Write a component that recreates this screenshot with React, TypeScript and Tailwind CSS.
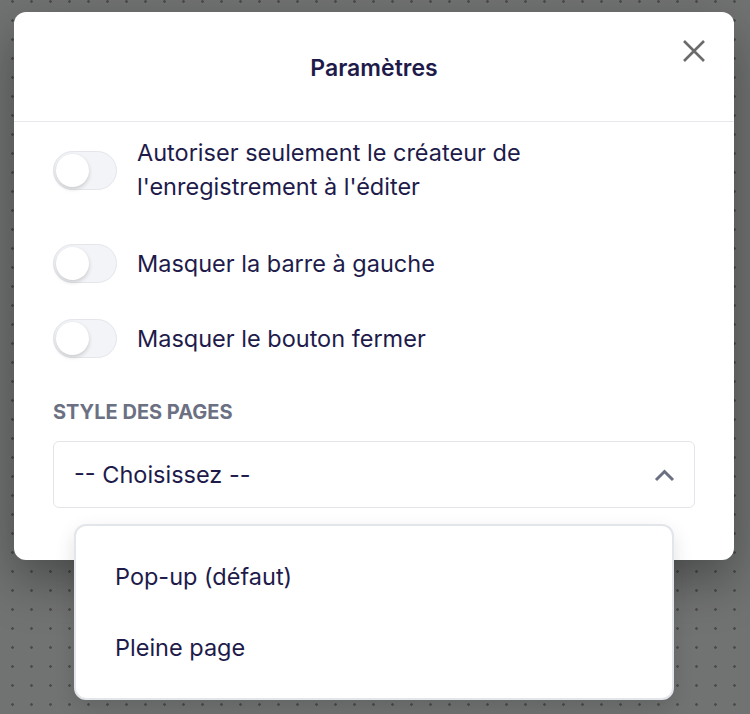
import { useState } from "react";

const font = { fontFamily: "Inter, 'Noto Sans', sans-serif" };

function Toggle() {
  return (
    <div className="relative h-[39px] w-16 shrink-0 rounded-full border border-[#e4e6eb] bg-[#f3f4f7]">
      <div className="absolute left-[2px] top-[2px] h-[33px] w-[33px] rounded-full bg-white shadow-[0_2px_4px_rgba(0,0,0,0.18)]" />
    </div>
  );
}

function ToggleRow({ label }: { label: string }) {
  return (
    <div className="flex items-center gap-5">
      <Toggle />
      <span className="text-[23.5px] leading-[34px] text-[#1e1b4b]">{label}</span>
    </div>
  );
}

export default function App() {
  const [open] = useState(true);

  return (
    <div
      style={font}
      className="relative h-[714px] w-[750px] overflow-hidden bg-[#717272] bg-[radial-gradient(circle,#4b4b4b_1px,transparent_1.6px)] bg-[length:19px_19px] bg-[position:3px_-8px]"
    >
      <div className="relative ml-[14px] mt-[12px] w-[720px] rounded-xl bg-white shadow-[0_20px_50px_rgba(0,0,0,0.35)]">
        {/* en-tête */}
        <div className="relative flex h-[110px] items-center justify-center border-b border-[#e5e7eb] pt-1">
          <h1 className="text-[23px] font-semibold text-[#1e1b4b]">Paramètres</h1>
          <button className="absolute right-[28px] top-[27px] text-[#6b6b6b]">
            <svg width="24" height="24" viewBox="0 0 24 24" fill="none" stroke="currentColor" strokeWidth="2.6">
              <path d="M2 2 L22 22 M22 2 L2 22" />
            </svg>
          </button>
        </div>

        <div className="flex flex-col px-[39px] pb-[52px] pt-[14px]">
          <ToggleRow label="Autoriser seulement le créateur de l'enregistrement à l'éditer" />
          <div className="mt-[40px]">
            <ToggleRow label="Masquer la barre à gauche" />
          </div>
          <div className="mt-[36px]">
            <ToggleRow label="Masquer le bouton fermer" />
          </div>

          <div className="mt-[42px] text-[20px] font-bold uppercase leading-6 text-[#6b7083]">
            Style des pages
          </div>

          <div className="relative mt-[17px]">
            <div className="flex h-[67px] items-center justify-between rounded-md border border-[#e3e5ea] pl-5 pr-[19px]">
              <span className="text-[23.5px] text-[#1e1b4b]">-- Choisissez --</span>
              <svg width="21" height="14" viewBox="0 0 21 14" fill="none" stroke="#6b7083" strokeWidth="3">
                <path d="M2 12 L10.5 3.5 L19 12" />
              </svg>
            </div>

            {open && (
              <div className="absolute left-[21px] right-[21px] top-[calc(100%+16px)] z-10 rounded-xl border-2 border-[#e2e5ea] bg-white py-[15px] shadow-[0_8px_20px_rgba(0,0,0,0.12)]">
                <div className="flex h-[71px] items-center pl-[39px] text-[23.5px] text-[#1e1b4b]">Pop-up (défaut)</div>
                <div className="flex h-[71px] items-center pl-[39px] text-[23.5px] text-[#1e1b4b]">Pleine page</div>
              </div>
            )}
          </div>
        </div>
      </div>
    </div>
  );
}
